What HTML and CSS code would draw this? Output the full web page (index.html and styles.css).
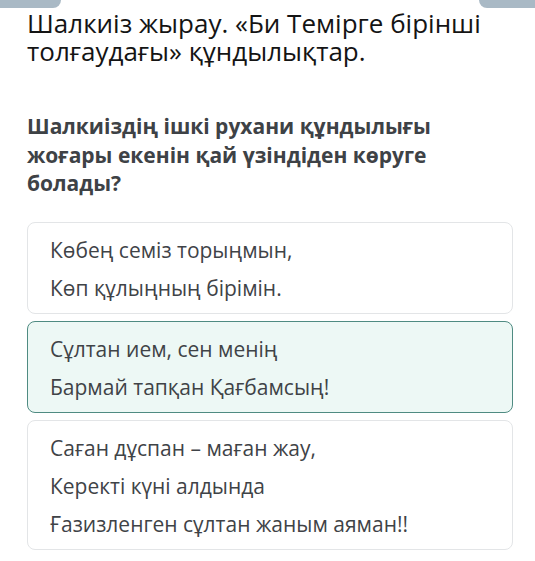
FILE: index.html
```html
<!DOCTYPE html>
<html lang="kk">
<head>
<meta charset="utf-8">
<link rel="stylesheet" href="styles.css">
</head>
<body>
<div class="tabs">
  <span class="tab tab-left"></span>
  <span class="tab tab-right"></span>
</div>
<main class="page">
  <h1 class="title">Шалкиіз жырау. «Би Темірге бірінші толғаудағы» құндылықтар.</h1>
  <h2 class="question">Шалкиіздің ішкі рухани құндылығы жоғары екенін қай үзіндіден көруге болады?</h2>
  <div class="options">
    <div class="option">
      <p>Көбең семіз торыңмын,</p>
      <p>Көп құлыңның бірімін.</p>
    </div>
    <div class="option selected">
      <p>Сұлтан ием, сен менің</p>
      <p>Бармай тапқан Қағбамсың!</p>
    </div>
    <div class="option">
      <p>Саған дұспан – маған жау,</p>
      <p>Керекті күні алдында</p>
      <p>Ғазизленген сұлтан жаным аяман!!</p>
    </div>
  </div>
</main>
</body>
</html>
```
FILE: styles.css
```css
html, body {
  margin: 0;
  padding: 0;
  background: #ffffff;
}
body {
  font-family: "Open Sans", "Noto Sans", sans-serif;
  width: 535px;
  height: 561px;
  overflow: hidden;
  position: relative;
}
.tabs {
  position: absolute;
  top: 0;
  left: 0;
  right: 0;
  height: 8px;
}
.tab {
  position: absolute;
  top: 0;
  height: 8px;
  background: #a9b9c5;
}
.tab-left {
  left: 0;
  width: 61px;
  border-bottom-right-radius: 8px;
}
.tab-right {
  right: 0;
  width: 56px;
  border-bottom-left-radius: 8px;
}
.page {
  padding: 9px 22px 0 27px;
}
.title {
  margin: 0;
  font-size: 26px;
  line-height: 28px;
  font-weight: 400;
  color: #141414;
}
.question {
  margin: 47px 0 0;
  font-size: 21px;
  line-height: 28.5px;
  font-weight: 700;
  color: #3e4246;
}
.options {
  margin-top: 24px;
  display: flex;
  flex-direction: column;
  gap: 7px;
}
.option {
  border: 1px solid #e3e5e7;
  border-radius: 8px;
  padding: 8px 22px 6px;
  background: #ffffff;
}
.option p {
  margin: 0;
  font-size: 21px;
  line-height: 38px;
  color: #3f4347;
}
.option.selected {
  border-color: #4f8b82;
  background: #edf8f5;
}
```
